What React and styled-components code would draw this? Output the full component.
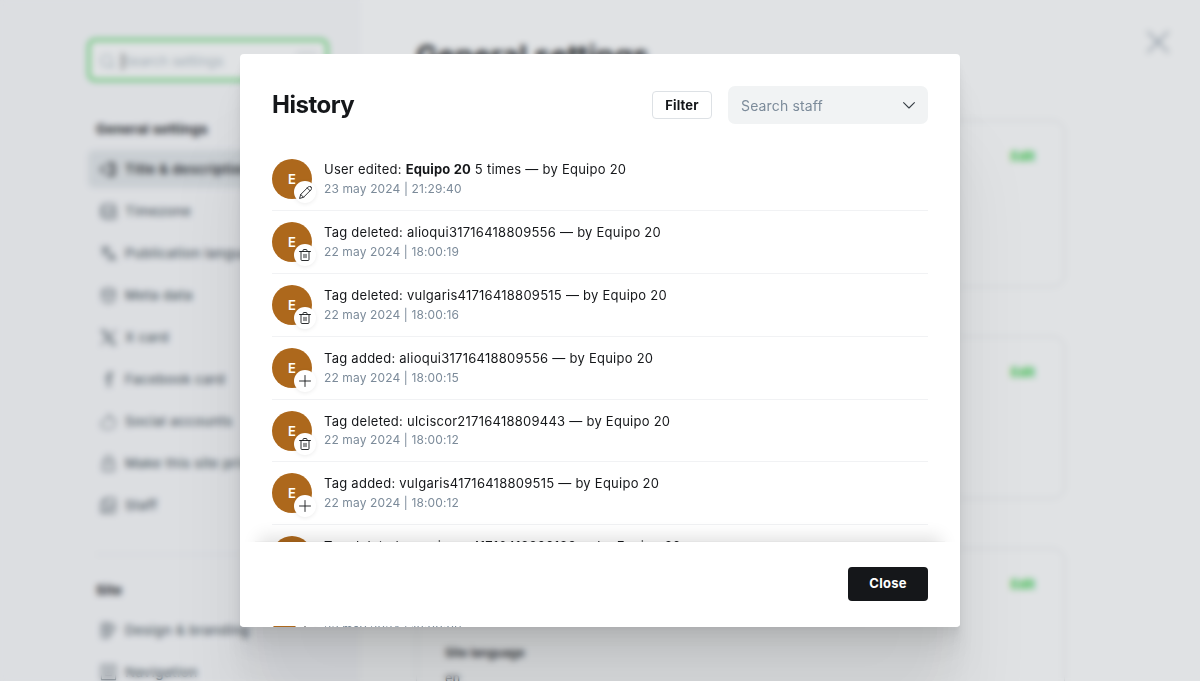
import React from 'react';
import styled, { createGlobalStyle } from 'styled-components';
import { Search, Languages, X } from 'lucide-react';

const GlobalStyle = createGlobalStyle`
  * { box-sizing: border-box; }
  body { margin: 0; overflow: hidden; }
`;

const Screen = styled.div`
  position: relative;
  display: flex;
  width: 1200px;
  height: 681px;
  overflow: hidden;
  background: #fff;
  color: #15171a;
  font-family: Inter, 'Liberation Sans', sans-serif;
`;

/* ---------- settings page ---------- */

const Sidebar = styled.aside`
  flex: none;
  width: 360px;
  height: 681px;
  overflow: hidden;
  padding: 39px 32px 0 88px;
  background: #fafafc;
`;

const SearchBox = styled.div`
  display: flex;
  align-items: center;
  height: 42px;
  padding: 2px 9px 0;
  border: 2px solid #30cf43;
  border-radius: 7px;
  background: #fff;
  box-shadow: 0 0 0 1px rgba(48, 207, 67, 0.2);
  color: #aebbc4;
  font-size: 13.7px;
`;

const Caret = styled.span`
  width: 1px;
  height: 17px;
  margin-left: 6px;
  background: #000;
`;

const Shortcut = styled.span`
  width: 20px;
  height: 20px;
  margin-left: auto;
  border: 1px solid #dde1e5;
  border-radius: 4px;
  background: #f4f5f6;
`;

const NavGroup = styled.nav`
  display: flex;
  flex-direction: column;
  padding-top: ${(p) => p.$top}px;
`;

const NavTitle = styled.h2`
  margin: 0 0 ${(p) => p.$gap}px 8px;
  font-size: 13.5px;
  line-height: 18px;
  font-weight: 700;
  letter-spacing: 0.25px;
`;

const NavItem = styled.div`
  display: flex;
  align-items: center;
  gap: 8px;
  height: 38px;
  margin: 0 0 4px;
  padding: 0 0 0 12px;
  border-radius: 6px;
  background: ${(p) => (p.$active ? '#e3e7ea' : 'transparent')};
  color: ${(p) => (p.$active ? '#15171a' : '#4c5860')};
  font-size: 13.5px;
  font-weight: ${(p) => (p.$active ? 600 : 500)};
  letter-spacing: 0.35px;
  white-space: nowrap;

  svg { flex: none; }
`;

const Divider = styled.hr`
  height: 1px;
  margin: 26px 0 0 8px;
  border: 0;
  background: #e6e9eb;
`;

const Content = styled.main`
  position: relative;
  display: flex;
  flex: 1;
  flex-direction: column;
  padding: 37px 135px 0 56px;
`;

const PageTitle = styled.h1`
  margin: 0 0 45px;
  font-size: 29px;
  line-height: 38px;
  font-weight: 700;
  letter-spacing: 0.1px;
`;

const Card = styled.section`
  flex: none;
  height: ${(p) => p.$height}px;
  margin-bottom: 49px;
  padding: 25px 29px 0 28px;
  border: 1px solid #e3e6e9;
  border-radius: 12px;
  font-size: 13px;
`;

const EditLink = styled.div`
  color: #30cf43;
  font-weight: 700;
  line-height: 20px;
  text-align: right;
`;

const Field = styled.dl`
  margin: 50px 0 0;
  line-height: 18px;

  dt { font-size: 12px; font-weight: 600; letter-spacing: 0.05px; }
  dd { margin: 7px 0 0; color: #394047; }
`;

const PageClose = styled.div`
  position: absolute;
  top: 22px;
  right: 22px;
  display: flex;
  color: #7c8b9a;
`;

/* ---------- modal ---------- */

const Backdrop = styled.div`
  position: absolute;
  inset: 0;
  display: flex;
  align-items: flex-start;
  justify-content: center;
  padding-top: 54px;
  background: rgba(98, 109, 121, 0.2);
  backdrop-filter: blur(3px);
`;

const Dialog = styled.div`
  position: relative;
  width: 720px;
  height: 573px;
  overflow: hidden;
  padding: 32px 32px 0;
  border-radius: 4px;
  background: #fff;
`;

const DialogShadow = styled.div`
  border-radius: 4px;
  box-shadow:
    0 2.8px 2.2px rgba(0, 0, 0, 0.02),
    0 6.7px 5.3px rgba(0, 0, 0, 0.028),
    0 12.5px 10px rgba(0, 0, 0, 0.035),
    0 22.3px 17.9px rgba(0, 0, 0, 0.042),
    0 41.8px 33.4px rgba(0, 0, 0, 0.05),
    0 100px 80px rgba(0, 0, 0, 0.07);
`;

const DialogHeader = styled.header`
  display: flex;
  align-items: center;
  height: 38px;
  margin-bottom: 24.5px;
`;

const DialogTitle = styled.h2`
  flex: 1;
  margin: 0;
  font-size: 24px;
  line-height: 30px;
  font-weight: 700;
  letter-spacing: -0.5px;
`;

const FilterButton = styled.button`
  width: 60px;
  height: 28px;
  margin-right: 16px;
  padding: 0;
  border: 1px solid #dde1e5;
  border-radius: 4px;
  background: #fff;
  color: #15171a;
  font: 700 13px/26px Inter, sans-serif;
  letter-spacing: 0.15px;
`;

const StaffSelect = styled.div`
  display: flex;
  align-items: center;
  justify-content: space-between;
  width: 200px;
  height: 38px;
  padding: 1px 13px 0;
  border-radius: 7px;
  background: #f1f3f4;
  color: #7c8b9a;
  font-size: 14px;
  letter-spacing: 0.15px;

  svg { color: #394047; }
`;

const Row = styled.article`
  display: flex;
  align-items: flex-start;
  gap: 12px;
  height: 62.8px;
  padding-top: 10.9px;
  border-bottom: 1px solid #f1f2f4;
`;

const Avatar = styled.div`
  position: relative;
  flex: none;
  width: 40px;
  height: 40px;
  border-radius: 50%;
  background: #ad681c;
  color: #fff;
  font-size: 13px;
  line-height: 41px;
  font-weight: 600;
  text-align: center;
`;

const Badge = styled.span`
  position: absolute;
  right: -4px;
  bottom: -4px;
  display: flex;
  align-items: center;
  justify-content: center;
  width: 22px;
  height: 22px;
  border-radius: 50%;
  background: #fff;
  box-shadow: 0 1px 4px rgba(0, 0, 0, 0.08);
  color: #15171a;
`;

const Entry = styled.div`
  padding-top: 1px;
  white-space: nowrap;
`;

const Summary = styled.div`
  font-size: 13px;
  line-height: 19px;
  letter-spacing: 0.25px;

  strong { font-weight: 700; letter-spacing: 0.15px; }
`;

const Timestamp = styled.time`
  display: block;
  margin-top: -0.2px;
  color: #7c8b9a;
  font-size: 12px;
  line-height: 19px;
  letter-spacing: 0.12px;
`;

const FooterShade = styled.div`
  position: absolute;
  right: 16px;
  bottom: 10px;
  left: 16px;
  height: 75px;
  box-shadow: 0 0 0 1px rgba(0, 0, 0, 0.025), 0 -8px 16px -3px rgba(0, 0, 0, 0.12);
`;

const DialogFooter = styled.footer`
  position: absolute;
  right: 0;
  bottom: 1px;
  left: 0;
  display: flex;
  align-items: center;
  justify-content: flex-end;
  height: 84px;
  padding: 0 32px;
  background: #fff;
`;

const CloseButton = styled.button`
  width: 80px;
  height: 34px;
  padding: 0 0 2px;
  border: 0;
  border-radius: 4px;
  background: #15171a;
  color: #fff;
  font: 700 13px/32px Inter, sans-serif;
  letter-spacing: 0.25px;
`;

const stroke = { fill: 'none', stroke: 'currentColor', strokeLinecap: 'round', strokeLinejoin: 'round' };

const navIcon = (d, width = 1.5) => () => (
  <svg width="17" height="17" viewBox="0 0 24 24" strokeWidth={width * 1.4} {...stroke}>
    <path d={d} />
  </svg>
);

const TextboxIcon = navIcon('M7 6 1 12l6 6M11 4h8a2 2 0 0 1 2 2v12a2 2 0 0 1-2 2h-8M16 2v20', 1.5);
const WorldClockIcon = navIcon('M21 8V4a2 2 0 0 0-2-2H8a6 6 0 0 0-6 6v8a6 6 0 0 0 6 6h3M5 5v14M12 9h10v13H12zM17 12v4h3', 1.3);
const MetaIcon = navIcon('M3 6c0-2 4-4 9-4s9 2 9 4v9c0 4-4 7-9 7s-9-3-9-7zM3 7c3 3 15 3 18 0M8 13c2 3 6 3 8 0', 1.2);
const XLogo = navIcon('M2 2h5l15 20h-5zM22 2l-9 9.5M2 22l9-9.5', 1.3);
const FacebookIcon = navIcon('M17 2h-2a4 4 0 0 0-4 4v16M14 10v12M7 10h9M17 2v4h-3v4', 1.1);
const LikeIcon = navIcon('M7 10l4-3 1-5c3 0 3 3 2 6h6c2 0 2 2 2 3l-2 8c0 2-2 3-4 3H6c-3 0-4-2-4-4v-5c0-2 3-3 5-3z', 1);
const LockIcon = navIcon('M4 10h16v12H4zM7 10V6a5 5 0 0 1 10 0v4M12 15v2', 1.1);
const StaffIcon = navIcon('M2 8 8 2h13v20H2zM2 8h6V2M5 20c1-5 5-7 8-5M13 12h9M13 12v10', 1.3);
const DesignIcon = navIcon('M3 2h9v20H3zM12 6l4-3 6 5-10 11M3 8h9M3 14h9', 1.3);
const NavigationIcon = navIcon('M2 2h20v20H2zM8 8h8v8H8z', 1.1);

const glyphs = {
  pencil: (
    <svg width="13" height="13" viewBox="0 0 24 24" strokeWidth="1.6" {...stroke}>
      <path d="M22.2 1.8a3.7 3.7 0 0 0-5.2 0L3.2 15.6 1 23l7.4-2.2L22.2 7a3.7 3.7 0 0 0 0-5.2zM15.2 3.6l5.2 5.2M3.2 15.6l5.2 5.2" />
    </svg>
  ),
  trash: (
    <svg width="12" height="12" viewBox="0 0 12 12" strokeWidth="0.9" {...stroke}>
      <path d="M.5 2.5h11M2 2.5v8a1 1 0 0 0 1 1h6a1 1 0 0 0 1-1v-8M4 2.5v-1a1 1 0 0 1 1-1h2a1 1 0 0 1 1 1v1M5 5.3v3.4M7 5.3v3.4" />
    </svg>
  ),
  add: (
    <svg width="12" height="12" viewBox="0 0 12 12" strokeWidth="0.9" {...stroke}>
      <path d="M6 .5v11M.5 6h11" />
    </svg>
  ),
};

const generalItems = [
  ['Title & description', TextboxIcon],
  ['Timezone', WorldClockIcon],
  ['Publication language', Languages],
  ['Meta data', MetaIcon],
  ['X card', XLogo],
  ['Facebook card', FacebookIcon],
  ['Social accounts', LikeIcon],
  ['Make this site private', LockIcon],
  ['Staff', StaffIcon],
];

const siteItems = [
  ['Design & branding', DesignIcon],
  ['Navigation', NavigationIcon],
];

const events = [
  { action: 'User edited', name: 'Equipo 20', times: 5, date: '23 may 2024', time: '21:29:40', glyph: 'pencil' },
  { action: 'Tag deleted', name: 'alioqui31716418809556', date: '22 may 2024', time: '18:00:19', glyph: 'trash' },
  { action: 'Tag deleted', name: 'vulgaris41716418809515', date: '22 may 2024', time: '18:00:16', glyph: 'trash' },
  { action: 'Tag added', name: 'alioqui31716418809556', date: '22 may 2024', time: '18:00:15', glyph: 'add' },
  { action: 'Tag deleted', name: 'ulciscor21716418809443', date: '22 may 2024', time: '18:00:12', glyph: 'trash' },
  { action: 'Tag added', name: 'vulgaris41716418809515', date: '22 may 2024', time: '18:00:12', glyph: 'add' },
  { action: 'Tag deleted', name: 'speciosus41716418809133', date: '22 may 2024', time: '18:00:09', glyph: 'trash' },
  { action: 'Tag added', name: 'ulciscor21716418809443', date: '22 may 2024', time: '18:00:09', glyph: 'add' },
];

const NavList = ({ items, active }) =>
  items.map(([label, Icon], i) => (
    <NavItem key={label} $active={i === active}>
      <Icon size={17} strokeWidth={2} />
      {label}
    </NavItem>
  ));

export default function App() {
  return (
    <Screen>
      <GlobalStyle />
      <Sidebar>
        <SearchBox>
          <Search size={17} />
          <Caret />
          Search settings
          <Shortcut />
        </SearchBox>
        <NavGroup $top={39}>
          <NavTitle $gap={12}>General settings</NavTitle>
          <NavList items={generalItems} active={0} />
        </NavGroup>
        <Divider />
        <NavGroup $top={26}>
          <NavTitle $gap={12}>Site</NavTitle>
          <NavList items={siteItems} />
        </NavGroup>
      </Sidebar>
      <Content>
        <PageTitle>General settings</PageTitle>
        <Card $height={167}><EditLink>Edit</EditLink></Card>
        <Card $height={163}><EditLink>Edit</EditLink></Card>
        <Card $height={180}>
          <EditLink>Edit</EditLink>
          <Field>
            <dt>Site language</dt>
            <dd>en</dd>
          </Field>
        </Card>
        <PageClose><X size={40} strokeWidth={1} /></PageClose>
      </Content>

      <Backdrop>
        <DialogShadow>
          <Dialog role="dialog">
            <DialogHeader>
              <DialogTitle>History</DialogTitle>
              <FilterButton>Filter</FilterButton>
              <StaffSelect>
                Search staff
                <svg width="12" height="7" viewBox="0 0 12 7" strokeWidth="1.1" {...stroke}>
                  <path d="M.6.6 6 6 11.4.6" />
                </svg>
              </StaffSelect>
            </DialogHeader>
            {events.map((e, i) => (
              <Row key={i}>
                <Avatar>
                  E
                  <Badge>{glyphs[e.glyph]}</Badge>
                </Avatar>
                <Entry>
                  <Summary>
                    {e.action}: {e.times ? <><strong>{e.name}</strong> {e.times} times</> : e.name} — by Equipo 20
                  </Summary>
                  <Timestamp>{e.date} | {e.time}</Timestamp>
                </Entry>
              </Row>
            ))}
            <FooterShade />
            <DialogFooter>
              <CloseButton>Close</CloseButton>
            </DialogFooter>
          </Dialog>
        </DialogShadow>
      </Backdrop>
    </Screen>
  );
}
